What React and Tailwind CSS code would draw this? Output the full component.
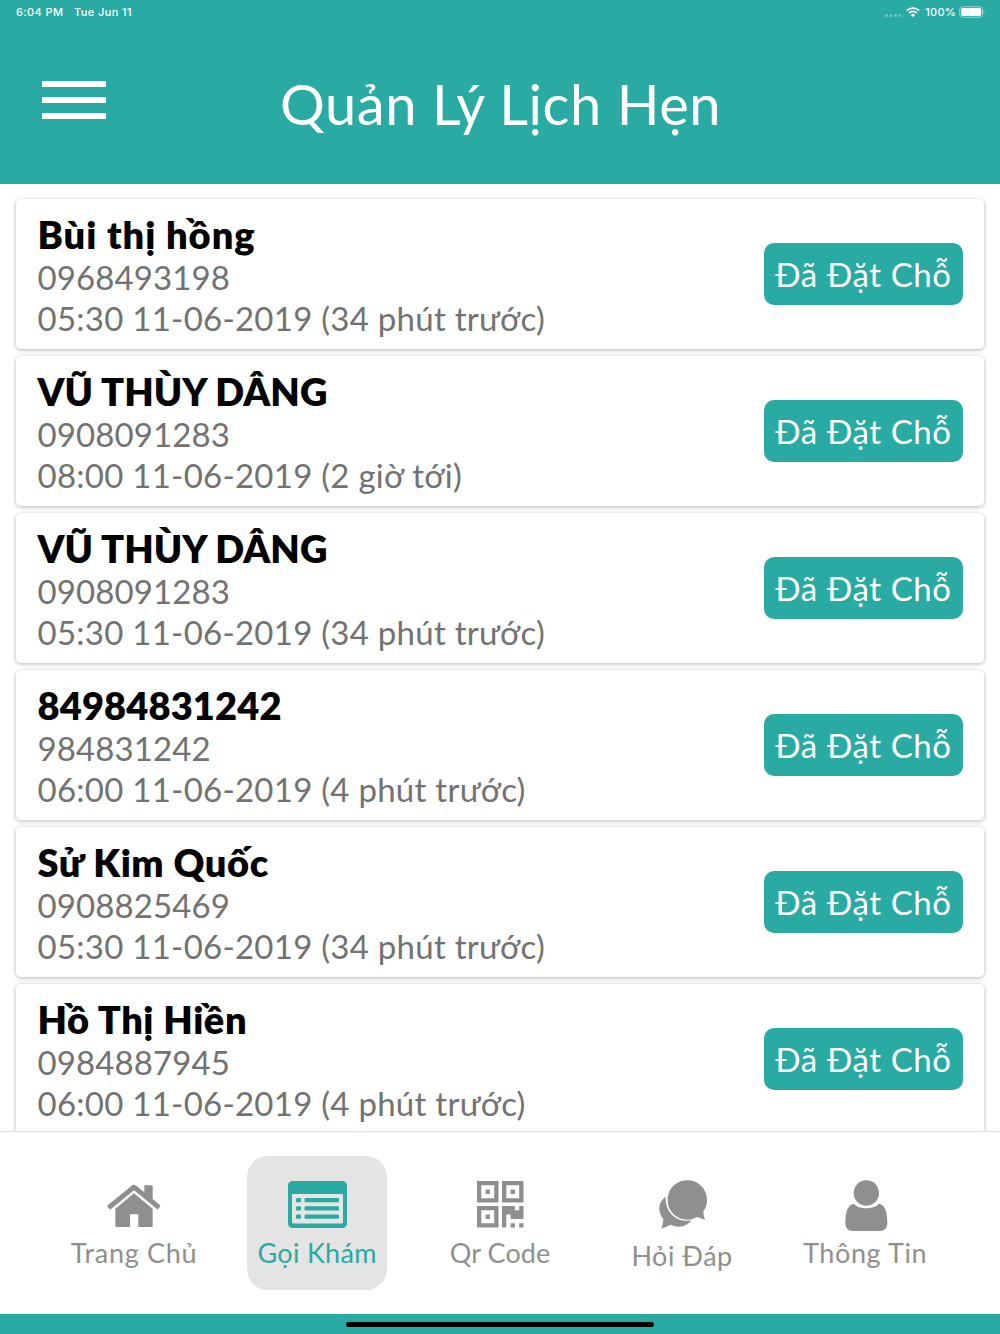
import React from 'react';

const appointments = [
  { name: 'Bùi thị hồng', phone: '0968493198', time: '05:30 11-06-2019 (34 phút trước)', tracking: 'tracking-[0.95px]' },
  { name: 'VŨ THÙY DÂNG', phone: '0908091283', time: '08:00 11-06-2019 (2 giờ tới)', tracking: 'tracking-[0.1px]' },
  { name: 'VŨ THÙY DÂNG', phone: '0908091283', time: '05:30 11-06-2019 (34 phút trước)', tracking: 'tracking-[0.1px]' },
  { name: '84984831242', phone: '984831242', time: '06:00 11-06-2019 (4 phút trước)', tracking: 'tracking-[0.15px]' },
  { name: 'Sử Kim Quốc', phone: '0908825469', time: '05:30 11-06-2019 (34 phút trước)', tracking: 'tracking-[0.55px]' },
  { name: 'Hồ Thị Hiền', phone: '0984887945', time: '06:00 11-06-2019 (4 phút trước)', tracking: 'tracking-[0.55px]' },
];

function StatusBar() {
  return (
    <div className="flex h-6 items-center justify-between pl-4 pr-[15px] font-['Inter',sans-serif] text-[11px] font-medium">
      <div className="flex gap-[10.5px] tracking-[0.4px]">
        <span>6:04 PM</span>
        <span>Tue Jun 11</span>
      </div>
      <div className="flex items-center">
        <div className="mr-[5px] mt-[7px] flex gap-[2px]">
          {[0, 1, 2, 3].map((i) => (
            <span key={i} className="h-[2.5px] w-[2.5px] rounded-full bg-white/35" />
          ))}
        </div>
        <svg className="mr-[5px] h-[10px] w-[14px]" viewBox="0 0 14 10" fill="none" stroke="#fff" strokeWidth="1.9">
          <path d="M0.8 3.6a9 9 0 0 1 12.4 0" />
          <path d="M3 6a5.8 5.8 0 0 1 8 0" />
          <path d="M7 10L4.9 7.9a3 3 0 0 1 4.2 0z" fill="#fff" stroke="none" />
        </svg>
        <span className="tracking-[0.25px]">100%</span>
        <svg className="ml-[3px] h-[12px] w-[26px]" viewBox="0 0 26 12">
          <rect x="0.7" y="0.7" width="22.8" height="10.6" rx="3" fill="none" stroke="#fff" strokeOpacity="0.5" />
          <rect x="2" y="2" width="20.2" height="8" rx="1.8" fill="#fff" />
          <path d="M24.6 4v4c1.2-.6 1.2-3.4 0-4z" fill="#fff" fillOpacity="0.5" />
        </svg>
      </div>
    </div>
  );
}

function Header() {
  return (
    <div className="h-[183.5px] shrink-0 bg-[#29aaa3] text-white">
      <StatusBar />
      <div className="grid h-[159px] grid-cols-[280px_440px_280px]">
        <button className="ml-[42.4px] mt-[57px] flex h-[38px] w-16 flex-col justify-between">
          <span className="h-[6px] w-full bg-white" />
          <span className="h-[6px] w-full bg-white" />
          <span className="h-[6px] w-full bg-white" />
        </button>
        <h1 className="mt-[45px] whitespace-nowrap text-center text-[56px] leading-[70px] tracking-[0.6px]">Quản Lý Lịch Hẹn</h1>
      </div>
    </div>
  );
}

function AppointmentCard({ name, phone, time, tracking }) {
  return (
    <div className="flex h-[150px] shrink-0 items-center justify-between rounded-[5px] bg-white pl-[21.5px] pr-[21px] shadow-[0_1px_4px_rgba(0,0,0,0.3)]">
      <div className="whitespace-nowrap pt-[2px] text-[33px] leading-[41px] text-[#727272]">
        <p className={`text-[38px] font-extrabold leading-[46px] text-black ${tracking}`}>{name}</p>
        <p className="tracking-[0.1px]">{phone}</p>
        <p className="tracking-[0.26px]">{time}</p>
      </div>
      <button className="h-[62px] w-[199px] whitespace-nowrap rounded-[10px] bg-[#29aaa3] pt-[2px] text-[33px] tracking-[0.6px] text-white">
        Đã Đặt Chỗ
      </button>
    </div>
  );
}

function HomeIcon() {
  return (
    <svg className="h-[44px] w-[54px]" viewBox="52 58 162 132" fill="currentColor">
      <path d="M133 86L189 132V184Q189 187 186 187H146V149H121V187H80Q77 187 77 184V132Z" />
      <path d="M128 62Q133 58 138 62L164 83V65Q164 62 167 62H186Q189 62 189 65V103L211 121Q213 123 211 126L206 132Q204 135 201 132L133 77L65 132Q62 135 59 132L54 127Q52 124 54 122Z" />
    </svg>
  );
}

function ListIcon() {
  return (
    <svg className="h-[47px] w-[59px]" viewBox="0 0 59 47" fill="currentColor">
      <path fillRule="evenodd" d="M5 0H54Q59 0 59 5V42Q59 47 54 47H5Q0 47 0 42V5Q0 0 5 0ZM5 13Q4 13 4 14V41Q4 42.5 5.5 42.5H53.5Q55 42.5 55 41V14Q55 13 54 13Z" />
      <rect x="8" y="17" width="5" height="4.2" rx="1.3" />
      <rect x="8" y="25.3" width="5" height="4.2" rx="1.3" />
      <rect x="8" y="33.6" width="5" height="4.2" rx="1.3" />
      <rect x="16.5" y="17" width="34.5" height="4.2" rx="1.3" />
      <rect x="16.5" y="25.3" width="34.5" height="4.2" rx="1.3" />
      <rect x="16.5" y="33.6" width="34.5" height="4.2" rx="1.3" />
    </svg>
  );
}

function QrIcon() {
  return (
    <svg className="h-[47px] w-[47px]" viewBox="0 0 47 47" fill="currentColor">
      <path fillRule="evenodd" d="M0 0H21.5V21.5H0ZM4.3 4.3V17.2H17.2V4.3ZM8.6 8.6H12.9V12.9H8.6Z" />
      <path fillRule="evenodd" d="M25 0H46.5V21.5H25ZM29.3 4.3V17.2H42.2V4.3ZM33.6 8.6H37.9V12.9H33.6Z" />
      <path fillRule="evenodd" d="M0 25H21.5V46.5H0ZM4.3 29.3V42.2H17.2V29.3ZM8.6 33.6H12.9V37.9H8.6Z" />
      <path d="M25 25H37.9V29.3H42.2V25H46.5V37.9H33.6V33.6H29.3V46.5H25ZM33.6 42.2H37.9V46.5H33.6ZM42.2 42.2H46.5V46.5H42.2Z" />
    </svg>
  );
}

function ChatIcon() {
  return (
    <svg className="h-[49px] w-[49px]" viewBox="41 28 147 147" fill="currentColor">
      <path d="M126 29C93 29 67 55 67 88C67 121 93 147 126 147C137 147 146 144 155 139Q166 142 179 148Q174 135 174 122C182 112 185 101 185 88C185 55 159 29 126 29Z" />
      <path d="M61 78C47 88 42 101 42 115C42 126 47 136 54 145Q53 160 48 174Q62 168 76 162C99 173 124 169 139 149C98 158 58 126 61 78Z" />
    </svg>
  );
}

function UserIcon() {
  return (
    <svg className="h-[51px] w-[43px]" viewBox="44 32 129 153" fill="currentColor">
      <circle cx="108" cy="71" r="38" />
      <path d="M71 103C82 121 134 121 145 103C162 105 171 124 171 161C171 176 162 185 149 185H67C54 185 45 176 45 161C45 124 54 105 71 103Z" />
    </svg>
  );
}

const tabs = [
  { label: 'Trang Chủ', icon: HomeIcon, spacing: 'mt-[5px] tracking-[0.7px]', iconPad: 'pt-[4px]' },
  { label: 'Gọi Khám', icon: ListIcon, active: true, spacing: 'mt-[5px] tracking-[0.3px]' },
  { label: 'Qr Code', icon: QrIcon, spacing: 'mt-[5px] tracking-[0.1px]' },
  { label: 'Hỏi Đáp', icon: ChatIcon, spacing: 'mt-[8px] -ml-[2px] tracking-[0.5px]' },
  { label: 'Thông Tin', icon: UserIcon, spacing: 'mt-[5px] -ml-[2px] tracking-[0.6px]', iconPad: 'pt-[3px]' },
];

function TabBar() {
  return (
    <div className="grid h-[183px] shrink-0 grid-cols-5 border-t border-[#dedede] bg-white pl-[42.6px] pr-[42.4px] pt-[24px]">
      {tabs.map(({ label, icon: Icon, active, spacing, iconPad = '' }) => (
        <button
          key={label}
          className={`mx-auto flex h-[134px] w-[140px] flex-col items-center rounded-[21px] pt-[22px] ${active ? 'bg-[#e4e4e4] text-[#29aaa3]' : 'text-[#8f8f8f]'}`}
        >
          <span className={`flex h-[52px] items-center ${iconPad}`}>
            <Icon />
          </span>
          <span className={`whitespace-nowrap text-[27px] leading-[36px] ${spacing}`}>{label}</span>
        </button>
      ))}
    </div>
  );
}

export default function App() {
  return (
    <div className="flex h-[1334px] w-[1000px] flex-col overflow-hidden bg-white font-['Lato','Noto_Sans',sans-serif]">
      <Header />
      <div className="flex min-h-0 flex-1 flex-col gap-[7px] overflow-hidden px-4 pt-[15.5px]">
        {appointments.map((a, i) => (
          <AppointmentCard key={i} {...a} />
        ))}
      </div>
      <TabBar />
      <div className="flex h-5 shrink-0 items-center justify-center bg-[#29aaa3]">
        <div className="h-[5px] w-[308px] rounded-full bg-black" />
      </div>
    </div>
  );
}
